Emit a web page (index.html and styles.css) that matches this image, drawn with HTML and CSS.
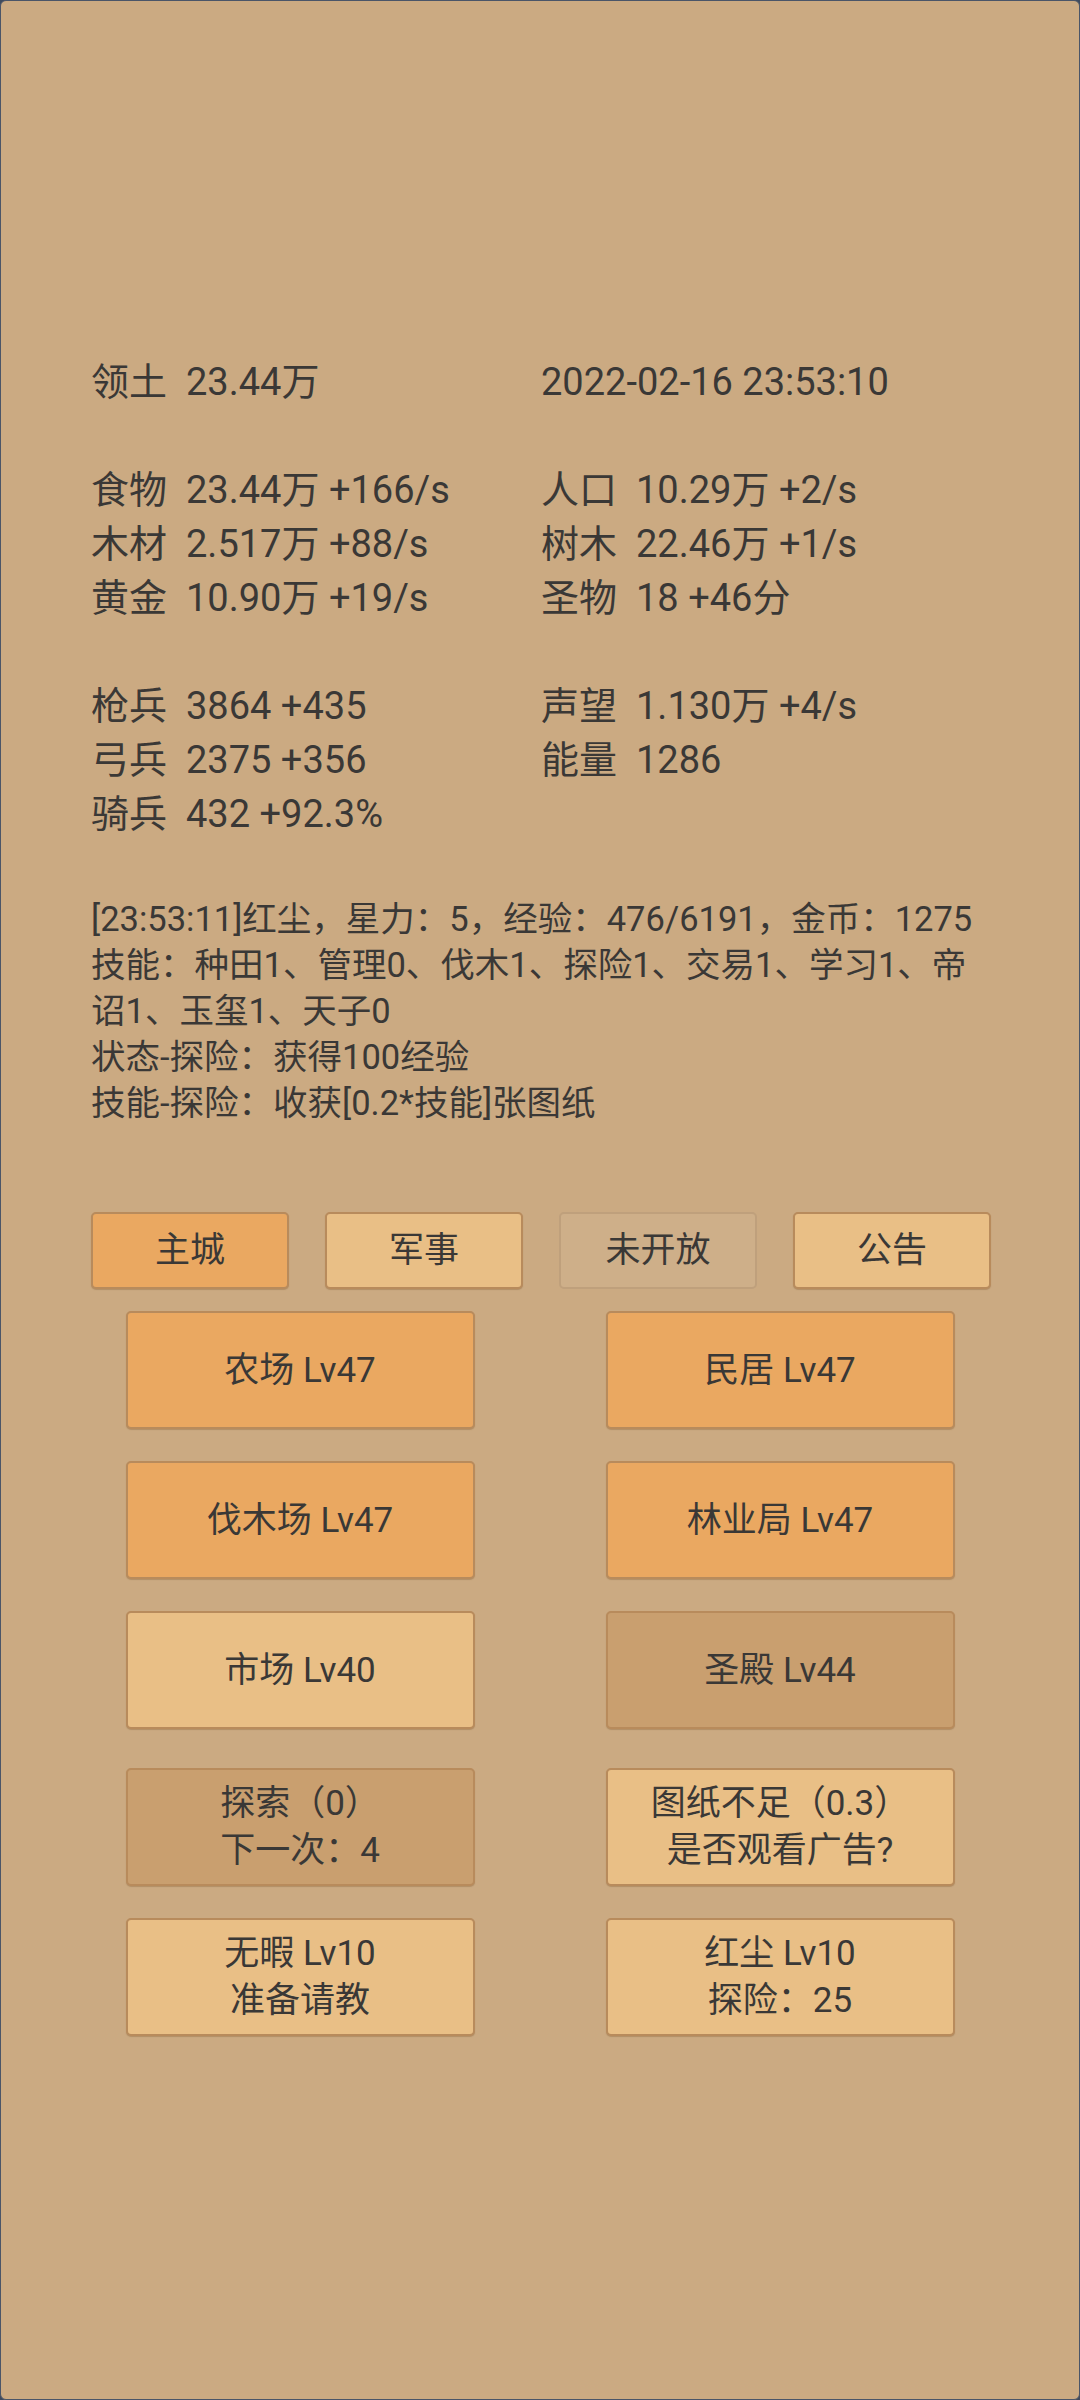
FILE: index.html
```html
<!DOCTYPE html>
<html lang="zh-CN">
<head>
    <meta charset="UTF-8">
    <meta name="viewport" content="width=device-width, initial-scale=1.0">
    <title>主城</title>
    <link rel="stylesheet" href="styles.css">
</head>
<body>

    <div id="screen">

        <div class="stats">
            <div class="row"><span class="label">领土</span>23.44万</div>
            <div class="row">2022-02-16 23:53:10</div>

            <div class="row empty"></div>
            <div class="row empty"></div>

            <div class="row"><span class="label">食物</span>23.44万 +166/s</div>
            <div class="row"><span class="label">人口</span>10.29万 +2/s</div>
            <div class="row"><span class="label">木材</span>2.517万 +88/s</div>
            <div class="row"><span class="label">树木</span>22.46万 +1/s</div>
            <div class="row"><span class="label">黄金</span>10.90万 +19/s</div>
            <div class="row"><span class="label">圣物</span>18 +46分</div>

            <div class="row empty"></div>
            <div class="row empty"></div>

            <div class="row"><span class="label">枪兵</span>3864 +435</div>
            <div class="row"><span class="label">声望</span>1.130万 +4/s</div>
            <div class="row"><span class="label">弓兵</span>2375 +356</div>
            <div class="row"><span class="label">能量</span>1286</div>
            <div class="row"><span class="label">骑兵</span>432 +92.3%</div>
            <div class="row empty"></div>

            <div class="row empty"></div>
            <div class="row empty"></div>
        </div>

        <div class="log">
            [23:53:11]红尘，星力：5，经验：476/6191，金币：1275<br>
            技能：种田1、管理0、伐木1、探险1、交易1、学习1、帝诏1、玉玺1、天子0<br>
            状态-探险：获得100经验<br>
            技能-探险：收获[0.2*技能]张图纸
        </div>

        <div class="tabs">
            <button class="tab active">主城</button>
            <button class="tab">军事</button>
            <button class="tab closed">未开放</button>
            <button class="tab">公告</button>
        </div>

        <div class="buildings">
            <button class="btn active">农场 Lv47</button>
            <button class="btn active">民居 Lv47</button>
            <button class="btn active">伐木场 Lv47</button>
            <button class="btn active">林业局 Lv47</button>
            <button class="btn">市场 Lv40</button>
            <button class="btn dim">圣殿 Lv44</button>
        </div>

        <div class="buildings actions">
            <button class="btn dim">探索（0）<br>下一次：4</button>
            <button class="btn">图纸不足（0.3）<br>是否观看广告?</button>
            <button class="btn">无暇 Lv10<br>准备请教</button>
            <button class="btn">红尘 Lv10<br>探险：25</button>
        </div>

    </div>

</body>
</html>
```

FILE: styles.css
```css
body {
    margin: 0;
    padding: 0;
    background-color: #3f4b5e;
    font-family: Roboto, "Noto Sans CJK SC", sans-serif;
    color: #3a3836;
}
#screen {
    box-sizing: border-box;
    height: 2400px;
    background-color: #cbaa82;
    border: 1px solid #4a5568;
    border-radius: 6px;
    padding-top: 354px;
}
.stats {
    display: grid;
    grid-template-columns: 450px 450px;
    padding-left: 90px;
    font-size: 38px;
    line-height: 54px;
}
.row {
    white-space: nowrap;
}
.empty {
    height: 54px;
}
.label {
    margin-right: 19px;
}
.log {
    width: 900px;
    margin-top: 1px;
    padding-left: 90px;
    font-size: 34.5px;
    line-height: 46px;
}
.tabs {
    display: flex;
    gap: 36px;
    padding-left: 90px;
    margin-top: 86px;
}
.tab, .btn {
    font-family: Roboto, "Noto Sans CJK SC", sans-serif;
    color: #3a3836;
    font-size: 35px;
    line-height: 47px;
    background-color: #e9bf86;
    border: 2px solid #b88b5c;
    border-radius: 5px;
    padding: 0;
    box-shadow: 0 1px 1px rgba(120, 80, 40, 0.3);
}
.tab {
    width: 198px;
    height: 77px;
}
.active {
    background-color: #eaa861;
}
.closed {
    background-color: #ceaf89;
    border-color: #bfa07c;
    box-shadow: none;
}
.dim {
    background-color: #c99f6f;
}
.buildings {
    display: grid;
    grid-template-columns: 349px 349px;
    justify-content: center;
    column-gap: 131px;
    row-gap: 32px;
    margin-top: 22px;
}
.btn {
    height: 118px;
}
.actions {
    margin-top: 39px;
}
```
